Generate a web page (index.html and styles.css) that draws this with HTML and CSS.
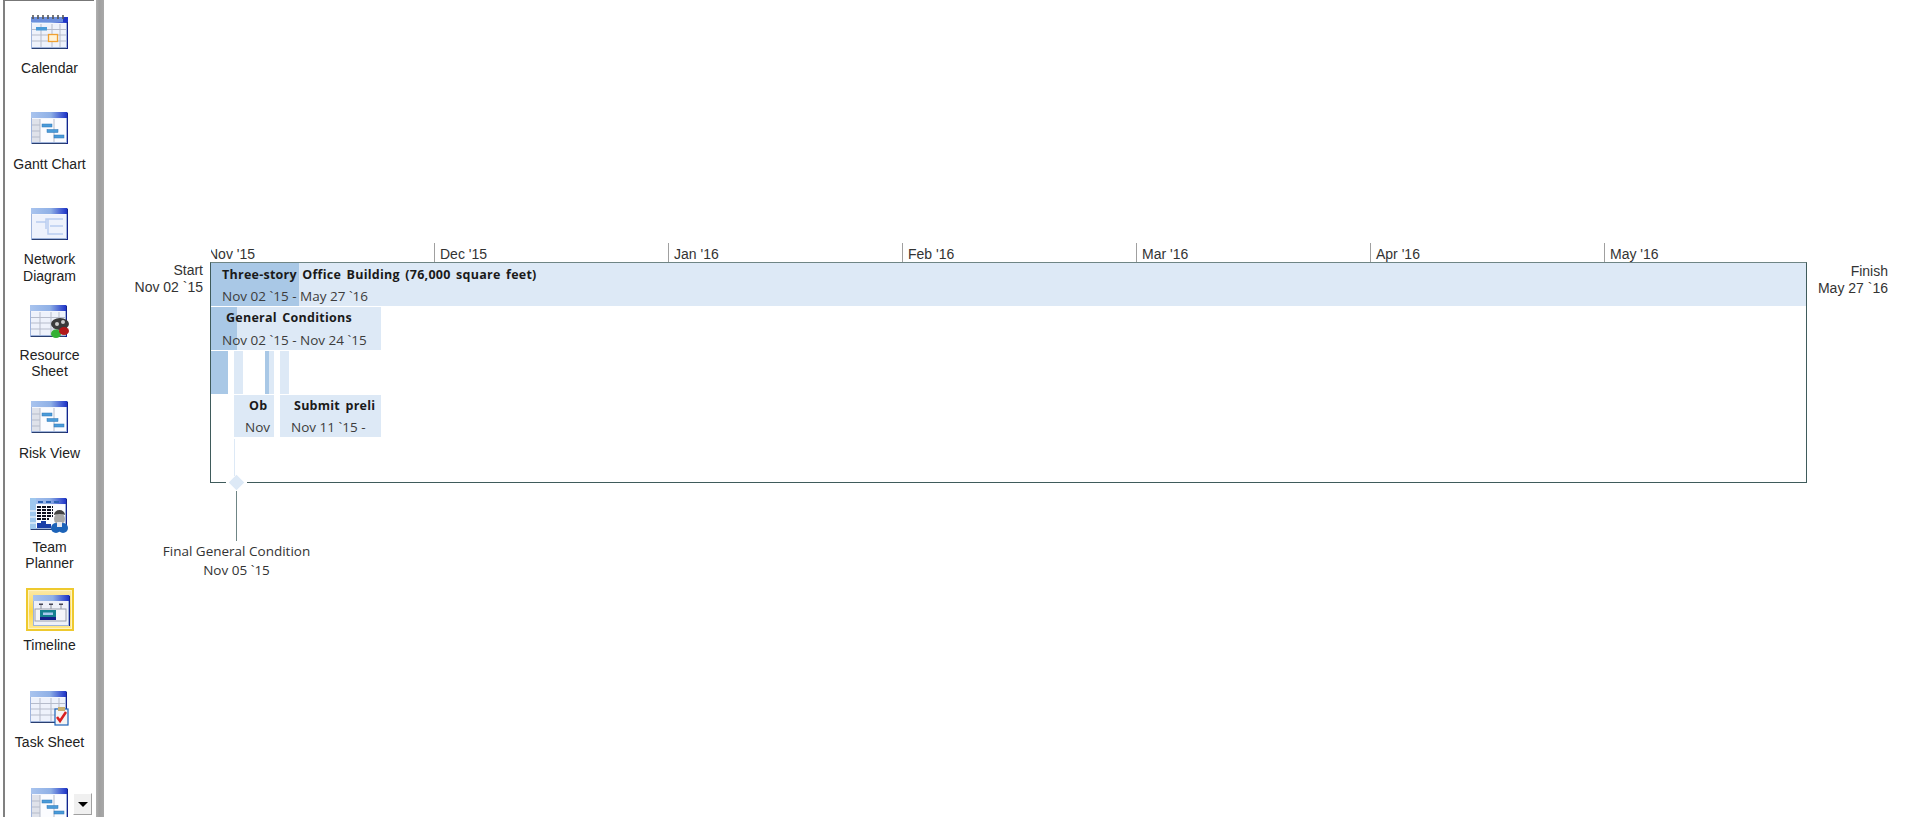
FILE: index.html
```html
<!DOCTYPE html>
<html lang="en">
<head>
<meta charset="utf-8">
<title>Timeline</title>
<link rel="stylesheet" href="styles.css">
</head>
<body>
<svg class="defs" width="0" height="0">
  <defs>
    <linearGradient id="title" x1="0" x2="1" y1="0" y2="0"><stop offset="0" stop-color="#a9c4ee"/><stop offset=".55" stop-color="#8fb0e6"/><stop offset="1" stop-color="#1f35c8"/></linearGradient>
    <g id="win">
      <rect x="1" y="1" width="37" height="32" fill="#8fa7d6"/>
      <rect x="2" y="31" width="36" height="2" fill="#2a3f70"/>
      <rect x="36" y="2" width="2" height="31" fill="#14238c"/>
      <rect x="1.500" y="1.500" width="35" height="30" fill="#f4f6fc" stroke="#9fb4dc"/>
      <rect x="1" y="1" width="36" height="6" fill="url(#title)"/>
    </g>
    <g id="grid">
      <rect x="2" y="8" width="34" height="23" fill="#eef2fb"/>
      <path d="M2 13.500H36M2 19H36M2 25H36M11 8V31M22 8V31M30 8V31" stroke="#b6bccb" stroke-width="1" fill="none"/>
    </g>
    <g id="gantt">
      <use href="#win"/>
      <rect x="2" y="8" width="34" height="23" fill="#fbfcff"/>
      <rect x="2" y="8" width="8" height="23" fill="#dfe2ea"/>
      <path d="M2 14H10M2 20H10M2 26H10M10 8V31M24 8V31" stroke="#b6bccb" fill="none"/>
      <rect x="12" y="13" width="10" height="3" fill="#4a9bd8" stroke="#2f74b8" stroke-width=".5"/>
      <rect x="17" y="18.500" width="11" height="3" fill="#4a9bd8" stroke="#2f74b8" stroke-width=".5"/>
      <rect x="24" y="24" width="10" height="3" fill="#4a9bd8" stroke="#2f74b8" stroke-width=".5"/>
    </g>
    <symbol id="i-calendar" viewBox="0 0 38 36">
      <g transform="translate(0 2)"><use href="#win"/><use href="#grid"/></g>
      <rect x="1" y="3" width="36" height="5" fill="#6c8fdc"/>
      <rect x="33" y="3" width="5" height="5" fill="#1f35c8"/>
      <path d="M3 1V5M8 1V5M13 1V5M18 1V5M23 1V5M28 1V5M33 1V5" stroke="#555" stroke-width="1.600"/>
      <rect x="6" y="13" width="11" height="3.500" fill="#4a9bd8"/>
      <rect x="18.500" y="20.500" width="9" height="7" fill="#fff3d8" stroke="#f0a030" stroke-width="1.300"/>
    </symbol>
    <symbol id="i-gantt" viewBox="0 0 38 34"><use href="#gantt"/></symbol>
    <symbol id="i-network" viewBox="0 0 38 36">
      <use href="#win"/>
      <rect x="2" y="8" width="34" height="23" fill="#eef2fc"/>
      <path d="M6 15H16V12H20M16 15V22M18 12V27H22M20 19H33M20 27H33M20 12H33" stroke="#b9cdf0" stroke-width="1.500" fill="none"/>
    </symbol>
    <symbol id="i-resource" viewBox="0 0 40 34">
      <use href="#win"/><use href="#grid"/>
      <ellipse cx="31" cy="20" rx="9" ry="6" fill="#3a3a3a"/>
      <circle cx="28" cy="20" r="2" fill="#ccc"/><circle cx="34" cy="18" r="2" fill="#ccc"/>
      <path d="M22 30a5 4.500 0 0 1 10 0a5 4 0 0 1-10 0Z" fill="#35b035"/>
      <path d="M30 27a5 4 0 0 1 10 0a5 4 0 0 1-10 0Z" fill="#b01818"/>
    </symbol>
    <symbol id="i-team" viewBox="0 0 40 37">
      <use href="#win"/>
      <rect x="2" y="8" width="34" height="23" fill="#fafbff"/>
      <rect x="1" y="1" width="6" height="31" fill="#9fc8ee"/>
      <path d="M1 14H7M1 20H7M1 26H7" stroke="#fff"/>
      <path d="M9 5H14M17 5H22M25 5H30" stroke="#2d62b4" stroke-width="2"/>
      <path d="M8 10H24M8 13H24M8 16H24M8 19H24M8 22H20" stroke="#0c1020" stroke-width="1.800" stroke-dasharray="4 1"/>
      <path d="M8 31V26H12V24H17V27H22V31Z" fill="#1a3ea8"/>
      <path d="M25 22a5.500 6 0 1 1 11 0q0 3-2 4h-7q-2-1-2-4Z" fill="#a8a8a8"/>
      <path d="M25 18a5.500 5 0 0 1 11 0q-5-2-11 0Z" fill="#444"/>
      <circle cx="27" cy="31" r="5" fill="#1d63b8"/><circle cx="34" cy="31" r="5" fill="#1d63b8"/>
      <rect x="28" y="25" width="5" height="5" fill="#e8e8f0"/>
    </symbol>
    <symbol id="i-timeline" viewBox="0 0 38 32">
      <use href="#win"/>
      <rect x="2" y="7" width="34" height="24" fill="#eef0f8"/>
      <path d="M7 9.500h4v1.500h-4zM17 9.500h4v1.500h-4zM27 9.500h4v1.500h-4z" fill="#445"/>
      <path d="M9 11V15M19 11V15M29 11V15" stroke="#8a8f9c" fill="none"/>
      <rect x="3" y="15" width="31" height="12" fill="#f4f5fa" stroke="#9a9fac"/>
      <rect x="8" y="16" width="16" height="10" fill="#16808f"/>
      <rect x="8" y="23" width="16" height="3" fill="#15208a"/>
      <rect x="11" y="18.500" width="10" height="2.500" fill="#a8c8ee"/>
    </symbol>
    <symbol id="i-task" viewBox="0 0 40 36">
      <use href="#win"/><use href="#grid"/>
      <rect x="26" y="19" width="13" height="16" fill="#f4f4f4" stroke="#1d63b8" stroke-width="1.200"/>
      <rect x="29" y="17" width="7" height="4" fill="#c8b070"/>
      <path d="M28 27L31 31L37 22" stroke="#d82020" stroke-width="2.500" fill="none"/>
    </symbol>
  </defs>
</svg>
<div class="app">
  <nav class="sidebar">
    <a class="view"><span class="icon"><svg class="i-38-36"><use href="#i-calendar"/></svg></span><span class="label">Calendar</span></a>
    <a class="view"><span class="icon"><svg class="i-38-34"><use href="#i-gantt"/></svg></span><span class="label">Gantt Chart</span></a>
    <a class="view"><span class="icon"><svg class="i-38-36"><use href="#i-network"/></svg></span><span class="label">Network<br>Diagram</span></a>
    <a class="view"><span class="icon"><svg class="i-40-34"><use href="#i-resource"/></svg></span><span class="label">Resource<br>Sheet</span></a>
    <a class="view"><span class="icon"><svg class="i-38-34"><use href="#i-gantt"/></svg></span><span class="label">Risk View</span></a>
    <a class="view"><span class="icon"><svg class="i-40-37"><use href="#i-team"/></svg></span><span class="label">Team<br>Planner</span></a>
    <a class="view active"><span class="icon"><svg class="i-38-32"><use href="#i-timeline"/></svg></span><span class="label">Timeline</span></a>
    <a class="view"><span class="icon"><svg class="i-40-36"><use href="#i-task"/></svg></span><span class="label">Task Sheet</span></a>
    <a class="view"><span class="icon"><svg class="i-38-34"><use href="#i-gantt"/></svg></span></a>
    <button class="more" aria-label="More views"><span class="caret"></span></button>
  </nav>
  <div class="gutter"></div>
  <main class="canvas">
    <div class="tick t0"><span>Nov '15</span></div>
    <div class="tick t1"><span>Dec '15</span></div>
    <div class="tick t2"><span>Jan '16</span></div>
    <div class="tick t3"><span>Feb '16</span></div>
    <div class="tick t4"><span>Mar '16</span></div>
    <div class="tick t5"><span>Apr '16</span></div>
    <div class="tick t6"><span>May '16</span></div>

    <div class="cap cap-start">Start<br>Nov 02 `15</div>
    <div class="cap cap-finish">Finish<br>May 27 `16</div>

    <div class="frame"></div>

    <div class="bar b-project"><div class="done d-project"></div><b>Three-story Office Building (76,000 square feet)</b><span>Nov 02 `15 - May 27 `16</span></div>
    <div class="bar b-general"><div class="done d-general"></div><b>General Conditions</b><span>Nov 02 `15 - Nov 24 `15</span></div>

    <div class="bar b-dark"></div>
    <div class="bar b-s1"></div>
    <div class="bar b-s2"><div class="done d-s2"></div></div>
    <div class="bar b-s3"></div>

    <div class="bar b-ob"><b>Ob</b><span>Nov</span></div>
    <div class="bar b-submit"><b>Submit preli</b><span>Nov 11 `15 -</span></div>

    <div class="stem"></div>
    <div class="gap"></div>
    <div class="diamond"></div>
    <div class="leader"></div>
    <div class="cap cap-milestone">Final General Condition<br>Nov 05 `15</div>
  </main>
</div>
</body>
</html>
```
FILE: styles.css
```css
* { box-sizing: border-box; }
html, body { margin: 0; height: 100%; overflow: hidden; background: #fff; }
body { font-family: "Liberation Sans", Arial, sans-serif; font-size: 14px; color: #2b2b2b; }
.defs { position: absolute; }

.app { display: flex; height: 817px; }

.sidebar {
  position: relative;
  width: 96px;
  flex: none;
  padding: 14px 0 0 4px;
  background: #fff;
  overflow: hidden;
  display: flex;
  flex-direction: column;
}
.sidebar::before {
  content: "";
  position: absolute;
  left: 3px; top: 0; bottom: 0;
  width: 2px;
  background: #808080;
}
.sidebar::after {
  content: "";
  position: absolute;
  left: 3px; right: 2px; top: 0;
  height: 1px;
  background: #777;
}
.view {
  flex: 0 0 96.600px;
  display: flex;
  flex-direction: column;
  align-items: center;
  width: 91px;
  text-align: center;
  line-height: 16px;
}
.icon { display: block; height: 36px; position: relative; left: -1px; }
.icon svg { display: block; overflow: visible; }
.i-38-36 { width: 38px; height: 36px; }
.i-38-34 { width: 38px; height: 34px; }
.i-40-34 { width: 40px; height: 34px; }
.i-40-37 { width: 40px; height: 37px; }
.i-38-32 { width: 38px; height: 32px; }
.i-40-36 { width: 40px; height: 36px; }
.label { display: block; margin-top: 10px; white-space: nowrap; color: #222; }
.view:nth-child(2) .label, .view:nth-child(5) .label { margin-top: 9px; }
.view:nth-child(3) .label { margin-top: 8px; line-height: 17px; }
.view:nth-child(4) .label { margin-top: 7px; }
.view:nth-child(6) .label { margin-top: 6px; }
.view:nth-child(8) .label { margin-top: 8px; }
.view.active .icon { left: 0; width: 48px; height: 43px; margin-top: -6px; padding: 6px 5px; background: linear-gradient(#fbe9a8, #fdd84a 55%, #ffe88c); border: 2px solid #eec92e; box-shadow: inset 0 0 0 1px #fff3c0; }
.view.active .icon svg { margin: -2px 0 0 -1px; }
.view.active .label { margin-top: 6px; }

.more {
  position: absolute;
  left: 73px; top: 793px;
  width: 19px; height: 22px;
  padding: 0;
  background: #f0f0f0;
  border: 1px solid;
  border-color: #fff #a0a0a0 #a0a0a0 #fff;
  display: flex; align-items: center; justify-content: center;
}
.caret { width: 0; height: 0; border: 5px solid transparent; border-top: 5px solid #000; border-bottom: 0; }

.gutter { width: 8px; flex: none; background: linear-gradient(90deg, #b0b0b0, #a0a0a0 40%, #a8a8a8); }

/* Free timeline canvas: each element's place is its date on the time axis. */
.canvas { position: relative; flex: 1; overflow: hidden; --ox: -104px; }

.tick { position: absolute; top: 243px; width: 1px; height: 20px; background: #a0a0a0; white-space: nowrap; }
.tick span { position: absolute; left: 6px; top: 3px; color: #333; }
.t0 { left: calc(202px + var(--ox)); background: transparent; }
.t0 span { clip-path: inset(0 0 0 3px); }
.t1 { left: calc(434px + var(--ox)); }
.t2 { left: calc(668px + var(--ox)); }
.t3 { left: calc(902px + var(--ox)); }
.t4 { left: calc(1136px + var(--ox)); }
.t5 { left: calc(1370px + var(--ox)); }
.t6 { left: calc(1604px + var(--ox)); }

.cap { position: absolute; line-height: 17px; color: #333; white-space: nowrap; }
.cap-start { right: calc(100% - 99px); top: 262px; text-align: right; }
.cap-finish { right: 32px; top: 263px; text-align: right; }
.cap-milestone { left: calc(236.500px + var(--ox)); top: 542px; transform: translateX(-50%); text-align: center; line-height: 19px; font-family: "Open Sans", sans-serif; font-size: 13.500px; }

.frame {
  position: absolute;
  left: calc(210px + var(--ox)); top: 262px;
  width: 1597px; height: 221px;
  border: 1px solid #3f5b5b;
  border-top-color: #6f8585;
}

.bar { position: absolute; background: #dde9f6; white-space: nowrap; overflow: hidden; line-height: 20px; font-family: "Open Sans", sans-serif; font-size: 13.500px; }
.bar b, .bar span { display: block; position: relative; color: #1a1a1a; }
.bar b { font-weight: 700; letter-spacing: .25px; word-spacing: 2px; font-size: 12.500px; height: 22px; padding-top: 1px; }
.bar span { color: #3c3c3c; }
.done { position: absolute; left: 0; top: 0; bottom: 0; background: #a9c8e6; }

.b-project { left: calc(211px + var(--ox)); top: 263px; width: 1595px; height: 43px; padding: 1px 0 0 11px; }
.d-project { width: 88px; }
.b-general { left: calc(211px + var(--ox)); top: 307px; width: 170px; height: 43px; padding: 0 0 0 11px; }
.b-general b, .b-ob b { height: 23px; }
.b-submit b { height: 22px; }
.b-general b { padding-left: 4px; }
.d-general { width: 26px; }
.b-dark { left: calc(211px + var(--ox)); top: 351px; width: 17px; height: 43px; background: #a9c8e6; }
.b-s1 { left: calc(234px + var(--ox)); top: 351px; width: 9px; height: 43px; }
.b-s2 { left: calc(265px + var(--ox)); top: 351px; width: 9px; height: 43px; }
.d-s2 { width: 4px; }
.b-s3 { left: calc(280px + var(--ox)); top: 351px; width: 9px; height: 43px; }
.b-ob { left: calc(234px + var(--ox)); top: 395px; width: 40px; height: 42px; padding: 0 0 0 11px; }
.b-ob b { padding-left: 4px; height: 22px; }
.b-submit { left: calc(280px + var(--ox)); top: 395px; width: 101px; height: 42px; padding: 0 0 0 11px; }
.b-submit b { padding-left: 3px; }

.stem { position: absolute; left: calc(234px + var(--ox)); top: 439px; width: 1px; height: 37px; background: #dde9f6; }
.gap { position: absolute; left: calc(226px + var(--ox)); top: 481px; width: 21px; height: 5px; background: #fff; }
.diamond { position: absolute; left: calc(231px + var(--ox)); top: 477px; width: 11px; height: 11px; background: #dde9f6; transform: rotate(45deg); }
.leader { position: absolute; left: calc(236px + var(--ox)); top: 491px; width: 1px; height: 50px; background: #6f8585; }
```
